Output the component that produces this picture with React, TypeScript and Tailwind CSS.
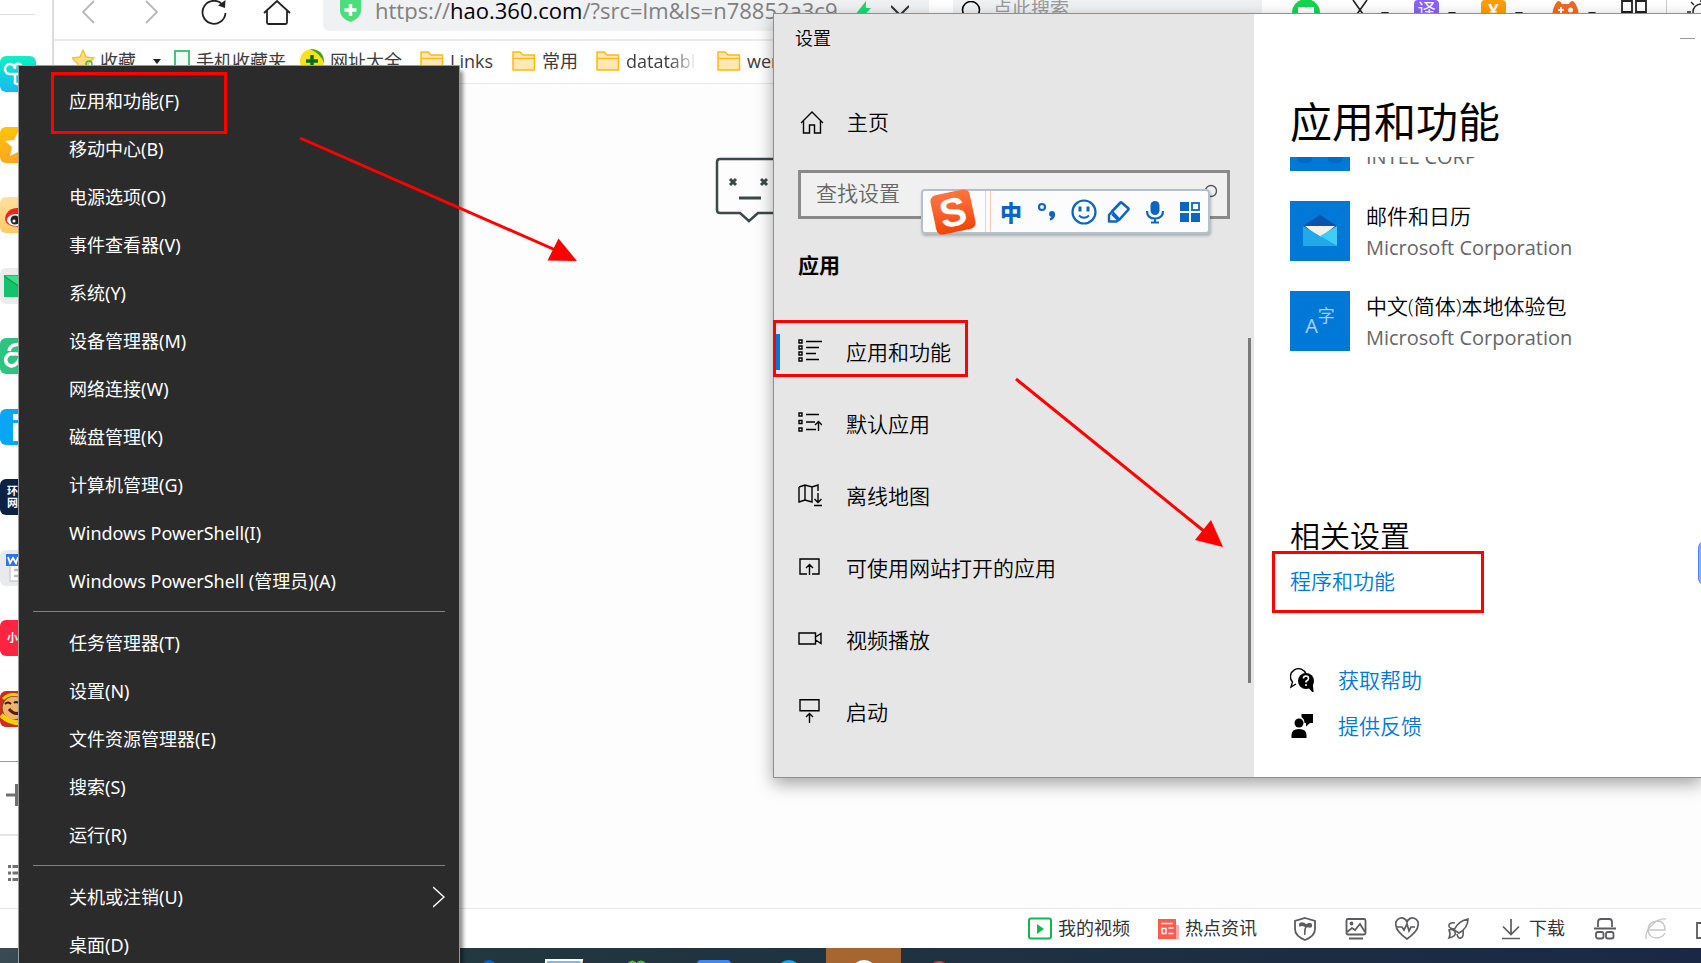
import type { ReactNode } from 'react';

interface IconProps {
  className?: string;
  box?: string;
  children: ReactNode;
}

// 線画アイコンの共通ラッパー
const Icon = ({ className = 'size-6', box = '0 0 24 24', children }: IconProps) => (
  <svg
    className={`shrink-0 ${className}`}
    viewBox={box}
    fill="none"
    stroke="currentColor"
    strokeWidth="1.4"
    aria-hidden="true"
  >
    {children}
  </svg>
);

const Caret = () => (
  <Icon className="h-2 w-2.5" box="0 0 10 8">
    <path d="M1 2h8L5 7z" fill="#222" stroke="none" />
  </Icon>
);

const Folder = () => (
  <Icon className="h-6 w-6">
    <path
      d="M1 21V3h7l3 3h11.500v15z"
      fill="#ffe9b0"
      stroke="#fbb917"
      strokeWidth="1.500"
      strokeLinejoin="round"
    />
    <path d="M1 9.500h21.500" stroke="#fbb917" />
  </Icon>
);

const sideApps = [
  {
    id: 'clover',
    style: 'bg-linear-to-b from-[#12f0c4] to-[#1cb8f0]',
    art: (
      <path
        d="M15 18H11a5 5 0 1 1 4-5V9a5 5 0 0 1 6 0v18a5 5 0 0 1-6 0v-9h12"
        stroke="#fff"
        strokeWidth="2.500"
      />
    ),
  },
  {
    id: 'star',
    style: 'bg-linear-to-b from-[#ffc400] to-[#ffa520]',
    art: <path d="m18 5 4 9 9 1-7 6 3 9-9-5-8 4 2-9-7-6 9-1z" fill="#fff" stroke="none" />,
  },
  {
    id: 'weibo',
    style: 'bg-linear-to-b from-[#ffe1a0] to-[#ffca62]',
    art: (
      <>
        <path d="M18 11C8 10 3 20 6 25s12 6 20 3V12z" fill="#e6281e" stroke="none" />
        <ellipse cx="16" cy="23" rx="9" ry="6" fill="#fff" stroke="none" />
        <circle cx="15" cy="23" r="4.500" fill="#222" stroke="none" />
        <circle cx="14" cy="24" r="1.500" fill="#fff" stroke="none" />
      </>
    ),
  },
  {
    id: 'mail',
    style: 'bg-[#ececec]',
    art: (
      <>
        <path d="M4 7h32v22H4z" fill="#14c26b" stroke="none" />
        <path d="m4 8 16 11L36 8" fill="#37e08c" stroke="#0d9c54" />
      </>
    ),
  },
  {
    id: 'cloud',
    style: 'bg-[#2ec381]',
    art: (
      <path
        d="M9 13a8 8 0 0 1 15-2M20 17q-3-2-7-1a6 6 0 1 0 3 10q2-2 4-6t9-2"
        stroke="#fff"
        strokeWidth="3.500"
      />
    ),
  },
  {
    id: 'info',
    style: 'bg-[#0aa5f5]',
    art: <path d="M13 5h9v6h-9zM13 14h9v18h-9z" fill="#fff" stroke="none" />,
  },
  { id: 'huanqiu', style: 'bg-[#0c2144]', text: '环球\n网' },
  {
    id: 'doc',
    style: 'bg-[#e9eaec]',
    art: (
      <>
        <path d="M10 11h26v20H10z" fill="#fff" stroke="#ccc" />
        <path d="M14 20h14M14 26h14" stroke="#bbb" strokeWidth="2.500" />
        <path d="M6 4h18v12H6z" fill="#2f74e6" stroke="none" />
        <path d="m8 7 2 6 3-5 3 5 2-6" stroke="#fff" strokeWidth="1.800" />
      </>
    ),
  },
  { id: 'xhs', style: 'bg-[#ff2442]', text: '小红' },
  {
    id: 'game',
    style: 'bg-[#cf2a1c]',
    art: (
      <>
        <ellipse cx="14" cy="17" rx="12" ry="12" fill="#eeb46d" stroke="#8a4a1c" />
        <path d="M3 8q7-7 18-3" stroke="#f4d000" strokeWidth="3" />
        <path d="M1 24q8 8 20 8" stroke="#f4d000" strokeWidth="5" />
        <path d="M9 18q5 6 10 4" stroke="#5b1a0a" strokeWidth="3" />
        <path d="M5 13q3-3 6 0M14 12q2-2 4 0" stroke="#3a1a0a" strokeWidth="2" />
      </>
    ),
  },
];

const Sidebar = () => (
  <aside className="flex w-[54px] shrink-0 flex-col border-r-2 border-[#dddddd] bg-white">
    <div className="mt-3.5 h-px w-[35px] bg-[#dddddd]" />
    <div className="mt-[41px] flex h-[671px] shrink-0 flex-col justify-between">
      {sideApps.map((app) => (
        <button
          key={app.id}
          aria-label={app.id}
          className={`flex h-9 w-9 items-center justify-center overflow-hidden rounded-md ${app.style}`}
        >
          {app.text ? (
            <span className="text-left text-[11px] leading-3 font-bold whitespace-pre text-white">{app.text}</span>
          ) : (
            <Icon className="size-9" box="0 0 36 36">
              {app.art}
            </Icon>
          )}
        </button>
      ))}
    </div>
    <div className="mt-[34px] h-px w-9 bg-[#5aa9f5]" />
    <button aria-label="添加" className="mt-[21px] ml-1.5 text-[#707070]">
      <Icon>
        <path d="M0 12h22M10.500 1v22" strokeWidth="3" />
      </Icon>
    </button>
    <div className="mt-[27px] h-0.5 w-9 bg-[#e4e4e4]" />
    <button aria-label="列表" className="mt-[25px] ml-2 text-[#707070]">
      <Icon>
        <path d="M0 5.500h3M4.500 5.500H20M0 12h3M4.500 12H20M0 18.500h3M4.500 18.500H20" strokeWidth="3" />
      </Icon>
    </button>
  </aside>
);

const Toolbar = () => (
  <div className="flex h-[41px] shrink-0 items-start border-b-2 border-[#ececec] bg-white">
    <div className="flex h-6 items-center gap-[35px] pl-5">
      <button aria-label="后退" className="text-[#b8b8b8]">
        <Icon className="size-7" box="0 0 28 28">
          <path d="M20 3 9 14l11 11" strokeWidth="1.800" />
        </Icon>
      </button>
      <button aria-label="前进" className="text-[#b8b8b8]">
        <Icon className="size-7" box="0 0 28 28">
          <path d="m9 3 11 11L9 25" strokeWidth="1.800" />
        </Icon>
      </button>
      <button aria-label="刷新" className="text-[#222222]">
        <Icon className="size-7" box="0 0 28 28">
          <path d="M25.500 15A11.500 11.500 0 1 1 22.500 6.500" strokeWidth="1.800" />
          <path d="m25.500 2-.500 8-7-2.500z" fill="currentColor" stroke="none" />
        </Icon>
      </button>
      <button aria-label="主页" className="text-[#222222]">
        <Icon className="size-7" box="0 0 28 28">
          <path d="m1 15 13-12 13 12M4 13v11.500a1.500 1.500 0 0 0 1.500 1.500h17a1.500 1.500 0 0 0 1.500-1.500V13" strokeWidth="1.800" />
        </Icon>
      </button>
    </div>
    <div className="ml-8 h-[31px] min-w-0 flex-1 rounded-b-md bg-[#eff1f3]">
      <div className="flex h-5 items-center pr-4 pl-[17px]">
        <Icon className="h-6 w-[21px]" box="0 0 21 24">
          <path d="M0 0h21v13q0 7-10.500 11Q0 20 0 13z" fill="#4edd7c" stroke="none" />
          <path d="M10.500 6v12M4.500 12h12" stroke="#fff" strokeWidth="3.500" />
        </Icon>
        <span className="ml-3.5 w-[464px] overflow-hidden text-[22px] leading-6 whitespace-nowrap text-[#808080]">
          https://<span className="text-black">hao.360.com</span>/?src=lm&amp;ls=n78852a3c9b
        </span>
        <Icon className="ml-4 h-5 w-4" box="0 0 16 20">
          <path d="M11 1 0 15h6l-1 5 11-12h-5z" fill="#1fd873" stroke="none" />
        </Icon>
        <Icon className="ml-5 h-5 w-[18px]" box="0 0 18 20">
          <path d="m0 6 9 9 9-9" stroke="#333" strokeWidth="2" />
        </Icon>
      </div>
    </div>
    <div className="ml-6 flex h-[31px] w-[309px] bg-[#eff1f3] pl-2">
      <Icon className="mt-px size-6 text-black">
        <path d="M17 16.500 21 21" strokeWidth="2" />
        <circle cx="10" cy="9" r="8.500" strokeWidth="1.600" />
      </Icon>
      <input
        aria-label="搜索"
        placeholder="点此搜索"
        className="ml-2 h-[18px] w-60 bg-transparent text-[19px] outline-none placeholder:text-[#9a9a9a]"
      />
    </div>
    <div className="flex h-6 w-[439px] shrink-0 items-center overflow-hidden pl-[30px] text-[#222222] [&>*]:shrink-0">
      <Icon className="size-7" box="0 0 28 28">
        <circle cx="14" cy="15" r="14" fill="#16d452" stroke="none" />
        <path d="M6 9h7l1 1 1-1h7v13H6z" fill="#fff" stroke="none" />
      </Icon>
      <Icon className="ml-8 h-6 w-4" box="0 0 16 24">
        <path d="m1 0 12 17M15 0 3 17" strokeWidth="1.600" />
      </Icon>
      <span className="mt-1 ml-3">
        <Caret />
      </span>
      <span className="ml-6 size-[25px] rounded-sm bg-[#8a63f4] text-center text-[18px] leading-5 text-white">译</span>
      <span className="mt-1 ml-2">
        <Caret />
      </span>
      <span className="ml-6 size-[25px] rounded-sm bg-[#ff9d0a] text-center text-[18px] leading-5 font-bold text-white">
        ¥
      </span>
      <span className="mt-1 ml-2">
        <Caret />
      </span>
      <Icon className="ml-7 size-[27px]" box="0 0 27 27">
        <path d="M6 2q3 0 4 3h7q1-3 4-3 3 2 5 9 2 10-3 12-3-1-5-3H9q-2 2-5 3-5-2-3-12Q3 4 6 2z" fill="#f26a24" stroke="none" />
        <path d="M9 8v6M6 11h6" stroke="#fff" strokeWidth="2" />
        <circle cx="18.500" cy="11" r="2.500" fill="#fff" stroke="none" />
      </Icon>
      <span className="mt-1 ml-2">
        <Caret />
      </span>
      <Icon className="ml-6 h-6 w-7" box="0 0 28 24">
        <path d="M1 1h10v11H1zM15 1h10v11H15z" strokeWidth="1.800" />
      </Icon>
      <div className="ml-[17px] h-6 w-px bg-[#cccccc]" />
      <Icon className="ml-5 size-7" box="0 0 28 28">
        <circle cx="14" cy="14" r="8" />
        <path d="M14 0v4M4 4l3 3M0 14h4" />
      </Icon>
    </div>
  </div>
);

const BookmarkBar = () => (
  <nav className="flex h-[43px] shrink-0 items-center border-b border-[#e6e6e6] bg-white pb-0.5 pl-[18px] text-[18px] whitespace-nowrap text-[#3c3c3c]">
    <Icon>
      <path d="m11 1 3 7 8 1-6 6 2 8-7-4-7 4 2-8-6-6 8-1z" fill="#ffdf7e" stroke="#fcc02e" />
      <circle cx="17" cy="15" r="3" stroke="#33b36b" />
    </Icon>
    <a href="#fav" className="ml-1">
      收藏
    </a>
    <span className="ml-4">
      <Caret />
    </span>
    <Icon className="ml-3 h-6 w-4" box="0 0 16 24">
      <path d="M1 2h14v20H1z" fill="#effcf3" stroke="#4dc07a" strokeWidth="2" />
    </Icon>
    <a href="#mobile" className="ml-1.5">
      手机收藏夹
    </a>
    <Icon className="ml-3.5 size-6">
      <circle cx="12" cy="12" r="12" fill="#fbe01c" stroke="none" />
      <path d="M10 0q14 0 14 14-3-9-14-14z" fill="#3aa228" stroke="none" />
      <path d="M12 6v12M6 12h12" stroke="#0c6a1c" strokeWidth="3.500" />
    </Icon>
    <a href="#sites" className="mr-[18px] ml-1.5">
      网址大全
    </a>
    <Folder />
    <a href="#links" className="ml-1.5 w-[62px] shrink-0">
      Links
    </a>
    <Folder />
    <a href="#common" className="mr-[18px] ml-1.5">
      常用
    </a>
    <Folder />
    <a
      href="#datatable"
      className="mr-5 ml-1.5 w-[71px] shrink-0 overflow-hidden bg-linear-to-r from-[#3c3c3c] from-60% to-white bg-clip-text text-transparent"
    >
      datatable
    </a>
    <Folder />
    <a href="#wenku" className="ml-1.5">
      wenku
    </a>
  </nav>
);

const StatusBar = () => (
  <footer className="flex h-10 shrink-0 items-center justify-end overflow-hidden border-t border-[#e6e6e6] bg-white text-[18px] text-[#333333]">
    <button className="flex items-center gap-1.5">
      <Icon>
        <rect x="1" y="1.500" width="22" height="20" rx="2" stroke="#10b84d" strokeWidth="2" />
        <path d="m9 7 7 5-7 5z" fill="#10b84d" stroke="none" />
      </Icon>
      我的视频
    </button>
    <button className="ml-7 flex items-center gap-1.5">
      <Icon className="h-5 w-[21px]" box="0 0 21 20">
        <path d="M14 6h7v14H3z" fill="#ffaaa5" stroke="none" />
        <path d="M0 0h18v20H0z" fill="#ff5a50" stroke="none" />
        <path d="M3 4.500h12M4 9.500h4v5H4zM10.500 9h5M10.500 14.500h5" stroke="#fff" />
      </Icon>
      热点资讯
    </button>
    <div className="ml-9 flex items-center gap-[27px] text-[#5c5c60]">
      <Icon>
        <path d="m12 1 10 3v8q0 7-10 11Q2 19 2 12V4z" strokeWidth="1.800" />
        <path d="M12 18q-1-5 1-8-3-3-6-1-1-3 2-3 2 0 4 2 2-2 5-1 1 3-1 3-2-1-4 0" fill="currentColor" />
      </Icon>
      <Icon>
        <rect x="2.500" y="2" width="19" height="15.500" rx="1.500" strokeWidth="1.800" />
        <path d="m3 15 5-4 3 2 5-6 5 8M5 21.500h14" strokeWidth="1.800" />
        <circle cx="7.500" cy="6.500" r="1.200" fill="currentColor" />
      </Icon>
      <Icon>
        <path d="M12 22Q1 14 1 8.500A5.500 5.500 0 0 1 12 5a5.500 5.500 0 0 1 11 3.500Q23 14 12 22z" strokeWidth="1.700" />
        <path d="M2 10h5l2 3 3-6 2 7 2-4h4" strokeWidth="1.700" />
      </Icon>
      <Icon>
        <path d="M8 13Q12 4 22 2q0 9-9 14zM8 13l5 3M9 6q-5-1-6 2t5 4M3 13q4-2 6 2t-6 6q2-4 0-8zM11 17q1 5 4 4t2-8" strokeWidth="1.600" />
      </Icon>
    </div>
    <button className="ml-[29px] flex items-center gap-1.5">
      <Icon className="size-6 text-[#5c5c60]">
        <path d="M12 2v15M4 9.500l8 8 8-8M3 21.500h18" strokeWidth="1.700" />
      </Icon>
      下载
    </button>
    <div className="ml-7 flex w-[108px] items-center gap-[27px] overflow-hidden text-[#5c5c60]">
      <Icon>
        <path d="M5 10V5q0-3 3-3h8q3 0 3 3v5M1 11.500h22" strokeWidth="1.800" />
        <rect x="3" y="15" width="7.500" height="6.500" rx="2" strokeWidth="1.800" />
        <rect x="13" y="15" width="7.500" height="6.500" rx="2" strokeWidth="1.800" />
      </Icon>
      <Icon className="size-6 text-[#c6c6c6]">
        <path d="M3 13h18q0-9-8-9-9 1-9 9 1 8 9 8 5 0 8-5M2 22q-1-8 6-14 7-7 14-6" />
      </Icon>
      <Icon>
        <path d="M2 6h20v15H2zM7 6V2h10v4" strokeWidth="1.800" />
      </Icon>
    </div>
  </footer>
);

const taskbarArt = [
  <circle key="a" cx="12" cy="7" r="7" fill="#0b62c4" stroke="none" />,
  <path key="b" d="M-6 0h36l-4 20H-6z" fill="#7db8ea" stroke="#fff" strokeWidth="2" />,
  <path key="c" d="M0 4q4-6 9-2l2 8H0zM10 2q5-4 10 2v8H10z" fill="#5cb82c" stroke="none" />,
  <rect key="d" x="-5" width="34" height="24" rx="4" fill="#3f86f7" stroke="none" />,
  <circle key="e" cx="12" cy="12" r="12" fill="#12adf5" stroke="none" />,
  <circle key="f" cx="12" cy="13" r="13" fill="#fff" stroke="none" />,
  <circle key="g" cx="12" cy="12" r="11" fill="#d8412f" stroke="none" />,
];

const Taskbar = () => (
  <div className="flex h-[15px] shrink-0 overflow-hidden bg-linear-to-r from-[#3a4a52] via-[#22363f] via-30% to-[#1a2845] pl-[451px]">
    {taskbarArt.map((art, i) => (
      <div key={i} className={`flex h-10 w-[75px] justify-center pt-3 ${i === 5 ? 'bg-[#a56631]' : ''}`}>
        <svg className="size-6 overflow-visible" viewBox="0 0 24 24" aria-hidden="true">
          {art}
        </svg>
      </div>
    ))}
  </div>
);

const menuGroups = [
  [
    '应用和功能(F)',
    '移动中心(B)',
    '电源选项(O)',
    '事件查看器(V)',
    '系统(Y)',
    '设备管理器(M)',
    '网络连接(W)',
    '磁盘管理(K)',
    '计算机管理(G)',
    'Windows PowerShell(I)',
    'Windows PowerShell (管理员)(A)',
  ],
  ['任务管理器(T)', '设置(N)', '文件资源管理器(E)', '搜索(S)', '运行(R)'],
  ['关机或注销(U)', '桌面(D)'],
];

// Win+X のメニュー
const PowerMenu = () => (
  <div className="absolute top-[65px] bottom-0 left-[18px] w-[442px] overflow-hidden border border-b-0 border-[#9b9b9b] bg-[#2b2b2b] pt-3 font-['Noto_Sans','Noto_Sans_CJK_SC',sans-serif] text-[18px] text-white shadow-[3px_6px_4px_rgba(0,0,0,0.45)]">
    {menuGroups.map((group, i) => (
      <ul key={i}>
        {i > 0 && <li className="mx-3.5 mt-[5px] mb-2 h-px bg-[#808080]" />}
        {group.map((label) => (
          <li key={label}>
            <button className="flex h-12 w-full items-center justify-between pr-3.5 pb-0.5 pl-[50px]">
              {label}
              {label.startsWith('关机') && (
                <Icon className="h-6 w-3" box="0 0 12 24">
                  <path d="m0 2 11 10L0 22" />
                </Icon>
              )}
            </button>
          </li>
        ))}
      </ul>
    ))}
  </div>
);

const settingItems = [
  {
    label: '应用和功能',
    art: (
      <path d="M1 1h3v3H1zM1 7h3v3H1zM1 13h3v3H1zM1 19h3v3H1zM8 2.500h16M8 8.500h13M8 14.500h10M8 20.500h13" />
    ),
  },
  {
    label: '默认应用',
    art: (
      <path d="M1 2h3v3H1zM1 9.500h3v3H1zM1 17h3v3H1zM8 3.500h13M8 11h9M8 18.500h10M20.500 20v-9M17 14l3.500-3.500L24 14" />
    ),
  },
  {
    label: '离线地图',
    art: <path d="m1 4 6-2 7 2 6-2v6M1 4v15l6-2 7 2V4M7 2v15M20 10v9M16.500 16l3.500 3.500 3.500-3.500M16 22.500h8" />,
  },
  {
    label: '可使用网站打开的应用',
    art: <path d="M9 19H2V4h19v15h-7M11.500 20V10M8 13l3.500-3.500L15 13" />,
  },
  {
    label: '视频播放',
    art: <path d="M1 6h16.500v11H1zM17.500 10 23 6.500v10L17.500 13" />,
  },
  {
    label: '启动',
    art: <path d="M2 0.700h19v11H2zM11.500 24v-9M8 18l3.500-3.500L15 18" />,
  },
];

const SettingsNav = () => (
  <section className="flex w-[480px] shrink-0 flex-col bg-[#e6e6e6] text-[21px] font-[350] text-black">
    <h2 className="mt-2.5 ml-[21px] text-[18px] leading-7">设置</h2>
    <a href="#home" className="mt-[55px] ml-[26px] flex h-8 items-center gap-[23px]">
      <Icon>
        <path d="M1 12 12 1l11 11M3.500 10v12H9.500v-8h5v8h6V10" />
      </Icon>
      主页
    </a>
    <div className="mx-6 mt-[31px] flex h-[49px] items-center border-3 border-[#8a8a8a] bg-[#f0f0f0] pr-2.5 pb-1 pl-[15px]">
      <input
        aria-label="查找设置"
        placeholder="查找设置"
        className="min-w-0 flex-1 bg-transparent leading-7 outline-none placeholder:text-[#666666]"
      />
      <Icon className="size-5 text-[#555555]" box="0 0 20 20">
        <circle cx="14" cy="8" r="5.500" />
        <path d="m10 12-8 7" />
      </Icon>
    </div>
    <h3 className="mt-[30px] ml-6 leading-8 font-bold">应用</h3>
    <ul className="mt-[35px]">
      {settingItems.map((item, i) => (
        <li key={item.label}>
          <button className="flex h-[72px] w-full items-center">
            <span className={`h-9 w-1.5 ${i === 0 ? 'bg-[#0078d7]' : ''}`} />
            <Icon className="mr-6 mb-0.5 ml-[18px] size-6">{item.art}</Icon>
            <span className="pt-0.5">{item.label}</span>
          </button>
        </li>
      ))}
    </ul>
  </section>
);

const apps = [
  {
    name: '邮件和日历',
    tile: (
      <Icon className="h-8 w-[34px]" box="0 0 34 32">
        <path d="M0 11 17 0l17 11v4H0z" fill="#0b53a8" stroke="none" />
        <path d="M2 11h30L17 23z" fill="#f4f0ee" stroke="none" />
        <path d="m0 11 34 20H0z" fill="#23a9ea" stroke="none" />
        <path d="m17 21 17-10v20z" fill="#41cdf8" stroke="none" />
      </Icon>
    ),
  },
  {
    name: '中文(简体)本地体验包',
    tile: (
      <span className="flex text-[#a9d2f6]">
        <span className="pt-2.5 text-[20px] leading-5">A</span>
        <span className="text-[17px] leading-5">字</span>
      </span>
    ),
  },
];

const SettingsContent = () => (
  <section className="flex min-w-0 flex-1 flex-col bg-white pl-9 text-[21px] text-black">
    <button aria-label="最小化" className="mt-6 mr-1.5 h-px w-[15px] self-end bg-[#999999]" />
    <h1 className="mt-[53px] text-[42px] leading-[60px]">应用和功能</h1>
    <div className="mt-[5px] flex h-3.5 gap-4 overflow-hidden">
      <div className="flex w-[60px] justify-between bg-[#0078d7] px-2">
        <span className="h-1.5 w-3.5 rounded-b bg-[#006ac4]" />
        <span className="h-1.5 w-3.5 rounded-b bg-[#006ac4]" />
      </div>
      <p className="-mt-3 text-[20px] leading-6 text-[#666666]">INTEL CORP</p>
    </div>
    <ul className="mt-[30px] flex flex-col gap-[30px]">
      {apps.map((app) => (
        <li key={app.name} className="flex h-[60px] gap-4">
          <div className="flex size-[60px] items-center justify-center bg-[#0078d7]">{app.tile}</div>
          <div className="leading-[31px]">
            <p className="font-[350]">{app.name}</p>
            <p className="text-[20px] text-[#666666]">Microsoft Corporation</p>
          </div>
        </li>
      ))}
    </ul>
    <h2 className="mt-[165px] text-[30px] leading-10 font-[350]">相关设置</h2>
    <div className="flex flex-col items-start font-[350] text-[#0078d7]">
      <a href="#programs" className="mt-[9px] leading-8">
        程序和功能
      </a>
      <a href="#help" className="mt-[60px] flex items-center gap-6 leading-[46px]">
        <Icon className="size-6 text-black">
          <path d="M6 16 1 19l1.500-5A8 8 0 1 1 16 6" />
          <circle cx="16" cy="13" r="8" fill="currentColor" stroke="none" />
          <path d="m18 18 5 6-1-8z" fill="currentColor" />
          <path d="M13.500 10.500q0-2.500 2.500-2.500t2.500 2.500q0 1.500-2.500 3v1M16 16v2" stroke="#fff" strokeWidth="1.600" />
        </Icon>
        获取帮助
      </a>
      <a href="#feedback" className="flex items-center gap-6 leading-[46px]">
        <Icon className="size-6 text-black">
          <circle cx="9" cy="9" r="4.500" fill="currentColor" stroke="none" />
          <path d="M1.500 24v-3q0-6 7.500-6t7.500 6v3zM11.500 0H23v9h-3l-4 3.500V9h-1.500q0-4-3-6z" fill="currentColor" stroke="none" />
        </Icon>
        提供反馈
      </a>
    </div>
  </section>
);

const ImeBar = () => (
  <div className="absolute top-[189px] left-[921px] flex h-[45px] w-[289px] items-center rounded border-2 border-[#b4c1cc] bg-[#fcfcfc] text-[#0b66c3] shadow-[1px_2px_3px_rgba(0,0,0,0.25)]">
    <span className="ml-2.5 flex size-10 shrink-0 -rotate-12 items-center justify-center rounded-md bg-linear-to-b from-[#ff7440] to-[#f54300] font-['Liberation_Sans',sans-serif] text-[40px] font-bold text-white">
      S
    </span>
    <span className="ml-3 h-full w-1.5 shrink-0 border-x border-[#ffc9b4]" />
    <button className="ml-2 w-6 text-[22px] leading-6 font-black">中</button>
    <button aria-label="标点" className="ml-3.5">
      <Icon>
        <circle cx="5" cy="7" r="3" strokeWidth="2.200" />
        <circle cx="15" cy="14" r="3" fill="currentColor" stroke="none" />
        <path d="M17 14q0 4-4 5.500" strokeWidth="2.500" />
      </Icon>
    </button>
    <button aria-label="表情" className="ml-2.5">
      <Icon className="size-[26px]" box="0 0 26 26">
        <circle cx="13" cy="13" r="11.500" strokeWidth="2.200" />
        <path d="M9 7.500v5M17 7.500v5" strokeWidth="3" />
        <path d="M8 16.500q5 4.500 10 0" strokeWidth="1.800" />
      </Icon>
    </button>
    <button aria-label="手写" className="ml-2.5">
      <Icon>
        <path d="M5 11.500 13 3q1-1 2 0l6 5q1 1 0 2l-8.500 9.500" strokeWidth="2.600" strokeLinejoin="round" />
        <path d="M5 11.500 2 15v6.500h7.500l3-2zM5 14l6 6" strokeWidth="2.400" strokeLinejoin="round" />
      </Icon>
    </button>
    <button aria-label="语音" className="ml-3">
      <Icon>
        <rect x="7.500" y="1" width="9" height="14" rx="4.500" fill="currentColor" stroke="none" />
        <path d="M4 11q0 7.500 8 7.500t8-7.500M12 18v4M8 22.500h8" strokeWidth="2.200" />
      </Icon>
    </button>
    <button aria-label="工具箱" className="ml-3">
      <Icon>
        <path d="M1 2h9v9H1zM1 13h9v9H1zM12 13h9v9h-9z" fill="currentColor" stroke="none" />
        <rect x="13" y="3" width="7" height="7" strokeWidth="1.800" />
      </Icon>
    </button>
  </div>
);

// 操作手順を示す赤い矢印と枠
const Annotations = () => (
  <div className="pointer-events-none">
    <div className="absolute top-[72px] left-[51px] h-[62px] w-44 border-3 border-[#ff0000]" />
    <div className="absolute top-[320px] left-[773px] h-[57px] w-[195px] border-3 border-[#ff0000]" />
    <div className="absolute top-[551px] left-[1272px] h-[62px] w-[212px] border-3 border-[#ff0000]" />
    <svg className="absolute top-[130px] left-[290px] h-[140px] w-[300px]" viewBox="0 0 300 140" aria-hidden="true">
      <path d="m10 8 260 114" stroke="#f00" strokeWidth="3" />
      <path d="m287 131-29.500-.500 11-22z" fill="#f00" />
    </svg>
    <svg className="absolute top-[370px] left-[1006px] h-[190px] w-[230px]" viewBox="0 0 230 190" aria-hidden="true">
      <path d="m10 9 194 157" stroke="#f00" strokeWidth="3" />
      <path d="m217 177-28-7 16-20z" fill="#f00" />
    </svg>
  </div>
);

const App = () => {
  return (
    <div className="relative flex h-screen flex-col overflow-hidden bg-[#fdfdfd] font-['Open_Sans','Noto_Sans_CJK_SC',sans-serif]">
      <div className="flex min-h-0 flex-1">
        <Sidebar />
        <div className="flex min-w-0 flex-1 flex-col">
          <Toolbar />
          <BookmarkBar />
          <main className="flex-1 overflow-hidden pt-[73px] pl-[660px]">
            <svg className="h-[68px] w-[100px]" viewBox="0 0 100 68" fill="none" stroke="#3d4947" strokeWidth="2.500">
              <path d="M100 2H6Q3 2 3 5v48q0 3 3 3h20l9 8 9-8h56" />
              <path d="m16 22 6 6m0-6-6 6M47 22l6 6m0-6-6 6M25 41h22" strokeWidth="3" />
            </svg>
          </main>
        </div>
      </div>
      <div className="-mt-10 flex flex-col">
        <StatusBar />
      </div>
      <Taskbar />

      <div className="absolute top-[13px] -right-px left-[773px] flex h-[765px] border border-[#8f8f8f] shadow-[0_6px_16px_rgba(0,0,0,0.35)]">
        <SettingsNav />
        <SettingsContent />
      </div>
      <div className="absolute top-[338px] left-[1248px] h-[345px] w-[3px] bg-[#7a7a7a]" />
      <div className="absolute top-[540px] -right-6 h-[46px] w-[27px] rounded-lg border border-[#4a86f7] bg-[#8ab0fb]" />
      <ImeBar />
      <PowerMenu />
      <Annotations />
    </div>
  );
};

export default App;
